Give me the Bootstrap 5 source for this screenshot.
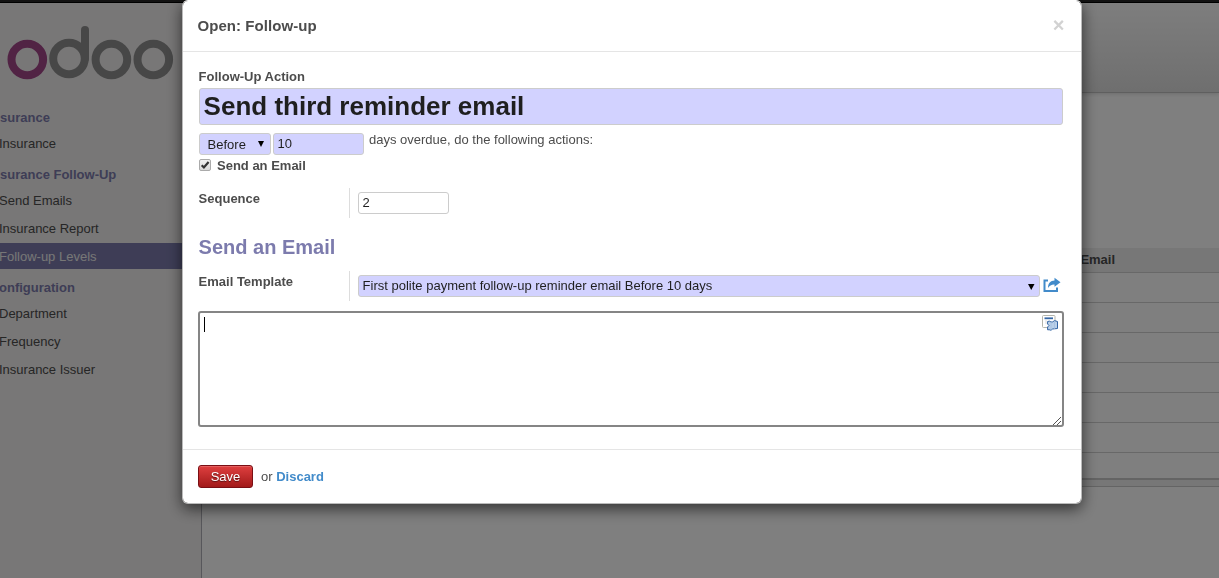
<!DOCTYPE html>
<html lang="en">
<head>
<meta charset="utf-8">
<title>Open: Follow-up</title>
<link href="https://cdn.jsdelivr.net/npm/bootstrap@5.3.0/dist/css/bootstrap.min.css" rel="stylesheet">
<style>
body{font:13px/20px "Liberation Sans",Arial,sans-serif;color:#4c4c4c;height:578px;overflow:hidden;background:#fff}
.topline{height:3px;background:#252525;border-bottom:1px solid #000}
.side{width:202px;background:#f0eeee;border-right:1px solid #afafb6}
.logo{height:101px}
.side h6{font-size:13px;font-weight:700;line-height:28px;height:26px;margin:0;color:#7c7bad}
.side h6.cut{text-indent:-1px}
.side .nav{gap:2px;margin-bottom:5px}
.side .nav-link{padding:0;line-height:28px;height:26px;color:#4c4c4c;text-indent:-1px}
.side .nav-link.active{background:#7c7bad;color:#eee}
.cpanel{height:90px;background:linear-gradient(#fcfcfc,#dedede);border-bottom:1px solid #bfbfbf;box-shadow:0 1px 4px rgba(0,0,0,.15)}
.list-area{margin-top:155px}
.list-head{height:25px;background:#eee;border-bottom:1px solid #d0d0d0;padding-left:878.4px;line-height:23px;font-weight:700}
.list-line{height:30px;border-bottom:1px solid #d0d0d0}
.list-foot{height:34px;background:linear-gradient(#fff 25px,#c8c8c8 25px,#c8c8c8 27px,#eee 27px);border-bottom:1px solid #c8c8c8}
.modal-backdrop{opacity:.5}
.modal-dialog{width:900px;max-width:900px;margin:0 0 0 182px}
.modal-content{height:504px;border:1px solid #bbb;border-top-color:#fff;border-radius:6px;box-shadow:0 5px 15px rgba(0,0,0,.6);color:#4c4c4c}
.modal-header{height:51px;padding:0 16.500px 0 14.5px;border-color:#e5e5e5}
.modal-title{font-size:15px;font-weight:700;line-height:20px;letter-spacing:.06px}
.xclose{color:#d2d2d2;font-size:20px;font-weight:700;line-height:18px;margin-top:-2px}
.modal-body{padding:15px 18px 0 15.6px}
.fld{background:#d2d2ff;border:1px solid #ccc;border-radius:3px;color:#1f1f1f;height:22px;line-height:20px;padding:0 4px;font-size:13px}
.fld-title{height:37px;font-size:26px;font-weight:700;line-height:34px;margin-top:1px}
.fld-when{width:72px}
.fld-num{width:91px}
.when-text{line-height:22px}
.after-days{margin:-3px 0 0 5.400px}
.chk-row{height:20px;margin-top:1px}
.chk-box{margin:-2px 6.400px 0 0}
.seq-row{margin-top:12px}
.lbl{width:151px;height:30px;line-height:22px;border-right:1px solid #ddd;font-weight:700}
.group-field{margin:4px 0 0 8px}
.sec{font-size:20px;font-weight:700;line-height:24px;color:#7c7bad;margin:17px 0 12px}
.ext{margin:6px 2px 0 3px;flex-shrink:0}
.notes{height:116px;margin:10px -1px 0 -.6px;border:2px solid #858585;border-radius:3px;position:relative}
.cursor{width:1px;height:15px;background:#000;margin:4px 0 0 4px}
.grip{right:1px;bottom:0}
.ico-tr{right:3px;top:1px}
.modal-footer{height:54px;padding:0 15px;border-color:#e5e5e5;justify-content:flex-start}
.modal-footer>*{margin:0}
.or-txt{margin-left:8px}
.btn-save{width:55px;height:23px;padding:0;font-size:13px;line-height:21px;color:#fff;border:1px solid #7a0f14;border-radius:3px;background:linear-gradient(#df3f3f,#a21a1a);box-shadow:inset 0 1px 0 rgba(255,255,255,.18);text-shadow:0 1px 1px rgba(0,0,0,.5)}
.discard{color:#428bca}
</style>
</head>
<body>
<div class="topline"></div>
<div class="d-flex h-100">
  <aside class="side flex-shrink-0">
    <div class="logo">
      <svg width="182" height="101" viewBox="0 3 182 101" fill="none" stroke-width="8" stroke-linecap="round">
        <circle cx="27.3" cy="59.5" r="15.8" stroke="#a24689"/>
        <g stroke="#8f8f8f"><circle cx="69" cy="58.5" r="15.8"/><path d="M85 30V58.5"/><circle cx="111.4" cy="59.5" r="15.8"/><circle cx="153.3" cy="59.5" r="15.8"/></g>
      </svg>
    </div>
    <h6>surance</h6>
    <nav class="nav flex-column"><a class="nav-link">Insurance</a></nav>
    <h6>surance Follow-Up</h6>
    <nav class="nav flex-column"><a class="nav-link">Send Emails</a><a class="nav-link">Insurance Report</a><a class="nav-link active">Follow-up Levels</a></nav>
    <h6 class="cut">onfiguration</h6>
    <nav class="nav flex-column"><a class="nav-link">Department</a><a class="nav-link">Frequency</a><a class="nav-link">Insurance Issuer</a></nav>
  </aside>
  <main class="flex-grow-1">
    <div class="cpanel"></div>
    <div class="list-area">
      <div class="list-head">Email</div>
      <div class="list-line"></div><div class="list-line"></div><div class="list-line"></div><div class="list-line"></div><div class="list-line"></div><div class="list-line"></div>
      <div class="list-foot"></div>
    </div>
  </main>
</div>
<div class="modal-backdrop"></div>
<div class="modal d-block overflow-hidden" tabindex="-1">
  <div class="modal-dialog">
    <div class="modal-content">
      <div class="modal-header flex-shrink-0">
        <div class="modal-title">Open: Follow-up</div>
        <div class="xclose">×</div>
      </div>
      <div class="modal-body">
        <div class="fw-bold">Follow-Up Action</div>
        <div class="fld fld-title">Send third reminder email</div>
        <div class="d-flex mt-2">
          <div class="fld fld-when d-flex justify-content-between ps-2 pe-1"><span class="when-text">Before</span><svg width="8" height="20" class="flex-shrink-0"><path d="M0 7H6L3 13z" fill="#000"/></svg></div>
          <div class="fld fld-num" style="margin-left:2px">10</div>
          <span class="after-days">days overdue, do the following actions:</span>
        </div>
        <div class="d-flex align-items-center fw-bold chk-row">
          <svg width="12" height="12" class="chk-box"><defs><linearGradient id="g" x2="0" y2="1"><stop stop-color="#f2f2f2"/><stop offset="1" stop-color="#d8d8d8"/></linearGradient></defs><rect x=".5" y=".5" width="11" height="11" rx="1.500" fill="url(#g)" stroke="#aaa"/><path d="M2.700 6.300L4.900 8.500L9.600 3" fill="none" stroke="#333" stroke-width="2.200"/></svg>
          Send an Email
        </div>
        <div class="d-flex seq-row"><div class="lbl">Sequence</div><div class="fld fld-num bg-white group-field">2</div></div>
        <h4 class="sec">Send an Email</h4>
        <div class="d-flex"><div class="lbl">Email Template</div>
          <div class="fld flex-grow-1 d-flex justify-content-between group-field"><span>First polite payment follow-up reminder email Before 10 days</span><svg width="7" height="20"><path d="M0 8H6.500L3.250 14z" fill="#000"/></svg></div>
          <svg width="18" height="16" viewBox="0 0 18 16" class="ext"><path d="M5 3.500H1.500V14H14V10.500" fill="none" stroke="#428bca" stroke-width="2"/><path d="M5 11C5 6 7.500 3.700 11.500 3.400V.8L17.500 5.300L11.500 9.800V7.400C8.500 7.300 6.500 8.500 5 11Z" fill="#428bca"/></svg>
        </div>
        <div class="notes">
          <div class="d-flex"><div class="cursor"></div></div>
          <svg class="position-absolute ico-tr" width="17" height="17" viewBox="0 0 17 17"><rect x=".5" y="1.500" width="12.500" height="12" rx="1" fill="#fff" stroke="#b5b5ac"/><path d="M2.500 4.300H11" stroke="#3465a4" stroke-width="1.800"/><path d="M3 7H5M3 9H5" stroke="#ddd"/><path d="M5.600 7.500Q7.500 6.500 9 8Q10.500 8.500 12.500 6.600L15.500 7.500V14.500L12.500 14.800Q10.500 14.500 9 16.200Q7 15.500 5.600 15.800V13L7 11.500L5.600 10Z" fill="#b9cfe8" stroke="#3465a4"/><path d="M9 8V16M12.500 7V14.700" stroke="#a3bfdf" stroke-width=".8"/></svg>
          <svg class="position-absolute grip" width="8" height="8"><path d="M0 8L8 0M4 8L8 4" stroke="#555"/></svg>
        </div>
      </div>
      <div class="modal-footer flex-shrink-0">
        <button class="btn btn-save" type="button">Save</button>
        <span class="or-txt">or <b class="discard">Discard</b></span>
      </div>
    </div>
  </div>
</div>
<script src="https://cdn.jsdelivr.net/npm/bootstrap@5.3.0/dist/js/bootstrap.bundle.min.js"></script>
</body>
</html>
